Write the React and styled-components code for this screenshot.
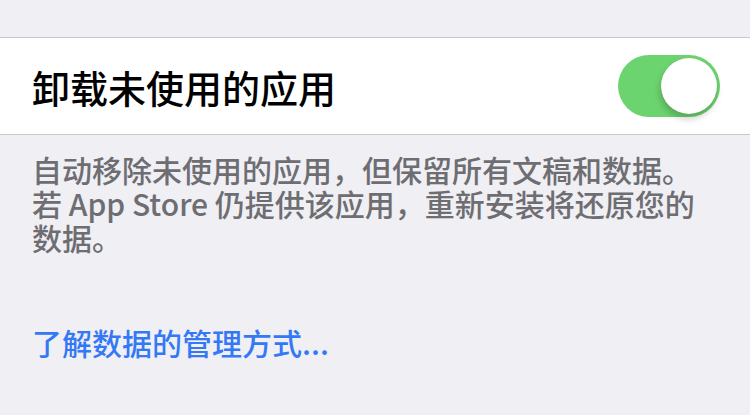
import React from "react";
import styled, { createGlobalStyle } from "styled-components";

const GlobalStyle = createGlobalStyle`
  html, body {
    margin: 0;
    padding: 0;
    background: #efeff4;
  }
  body {
    font-family: "Noto Sans CJK SC", "Noto Sans", sans-serif;
    -webkit-font-smoothing: antialiased;
  }
`;

const Page = styled.div`
  width: 750px;
  height: 415px;
  background: #efeff4;
  padding-top: 37px;
  box-sizing: border-box;
  overflow: hidden;
`;

const Row = styled.div`
  height: 98px;
  background: #ffffff;
  border-top: 1px solid #c8c7cc;
  border-bottom: 1px solid #c8c7cc;
  display: flex;
  align-items: center;
  padding: 0 30px 0 32px;
  box-sizing: border-box;
`;

const Title = styled.div`
  font-size: 38px;
  font-weight: 500;
  color: #000000;
  flex: 1;
`;

const Switch = styled.div`
  position: relative;
  width: 102px;
  height: 62px;
  border-radius: 31px;
  background: ${p => (p.on ? "#6cd46f" : "#e5e5ea")};
`;

const Knob = styled.div`
  position: absolute;
  top: 3px;
  left: ${p => (p.on ? "43px" : "3px")};
  width: 56px;
  height: 56px;
  border-radius: 50%;
  background: #ffffff;
  box-shadow: -1px 5px 7px rgba(0, 0, 0, 0.2), 0 0 1px rgba(0, 0, 0, 0.15);
`;

const Footer = styled.div`
  padding: 17px 32px 0 32px;
  font-size: 30px;
  font-weight: 500;
  line-height: 34px;
  color: #6d6d72;
`;

const Link = styled.div`
  margin-top: 70px;
  padding: 0 32px;
  font-size: 30px;
  font-weight: 500;
  line-height: 36px;
  color: #3478f6;
`;

export default function App() {
  return (
    <Page>
      <GlobalStyle />
      <Row>
        <Title>卸载未使用的应用</Title>
        <Switch on>
          <Knob on />
        </Switch>
      </Row>
      <Footer>
        自动移除未使用的应用，但保留所有文稿和数据。
        <br />
        若 App Store 仍提供该应用，重新安装将还原您的
        <br />
        数据。
      </Footer>
      <Link>了解数据的管理方式...</Link>
    </Page>
  );
}
